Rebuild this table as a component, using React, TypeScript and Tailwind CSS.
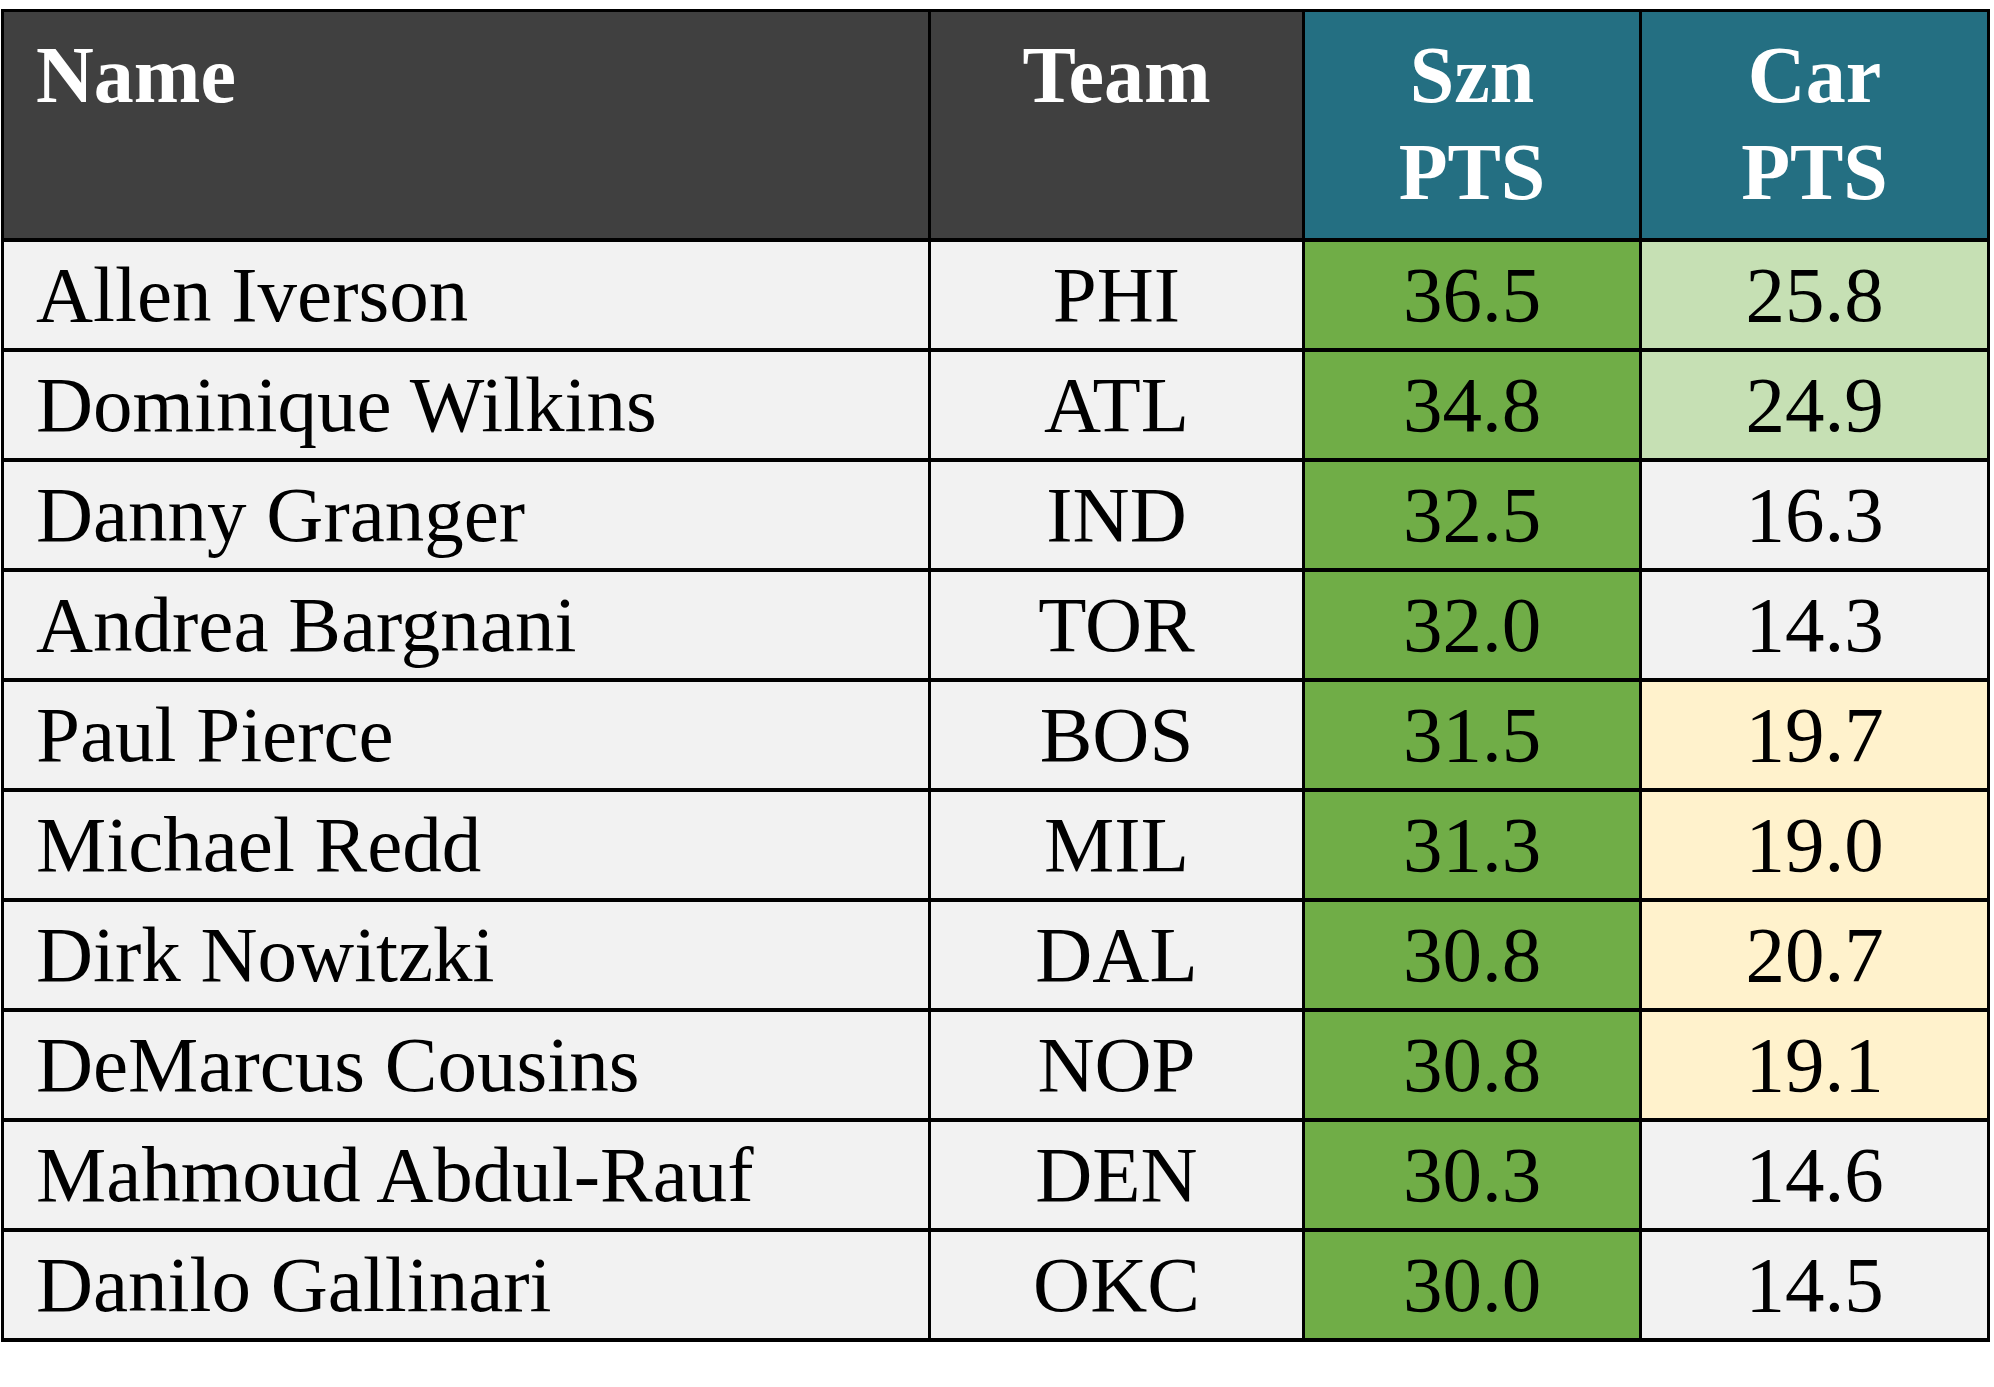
import { Fragment } from "react";

type Row = {
    name: string;
    team: string;
    szn: string;
    car: string;
    carTone: "lightgreen" | "yellow" | "none";
};

const rows: Row[] = [
    { name: "Allen Iverson", team: "PHI", szn: "36.5", car: "25.8", carTone: "lightgreen" },
    { name: "Dominique Wilkins", team: "ATL", szn: "34.8", car: "24.9", carTone: "lightgreen" },
    { name: "Danny Granger", team: "IND", szn: "32.5", car: "16.3", carTone: "none" },
    { name: "Andrea Bargnani", team: "TOR", szn: "32.0", car: "14.3", carTone: "none" },
    { name: "Paul Pierce", team: "BOS", szn: "31.5", car: "19.7", carTone: "yellow" },
    { name: "Michael Redd", team: "MIL", szn: "31.3", car: "19.0", carTone: "yellow" },
    { name: "Dirk Nowitzki", team: "DAL", szn: "30.8", car: "20.7", carTone: "yellow" },
    { name: "DeMarcus Cousins", team: "NOP", szn: "30.8", car: "19.1", carTone: "yellow" },
    { name: "Mahmoud Abdul-Rauf", team: "DEN", szn: "30.3", car: "14.6", carTone: "none" },
    { name: "Danilo Gallinari", team: "OKC", szn: "30.0", car: "14.5", carTone: "none" },
];

const toneClass = {
    lightgreen: "bg-[#c6e0b4]",
    yellow: "bg-[#fff2cc]",
    none: "bg-[#f2f2f2]",
};

export default function App() {
    return (
        <div className="min-h-screen bg-white pt-[9px] pl-[1px] font-['Liberation_Serif',serif]">
            <div className="grid w-fit grid-cols-[924px_371px_334px_345px] grid-rows-[226px_repeat(10,106px)] gap-x-[3px] gap-y-[4px] bg-black p-[3px] pb-[4px]">
                <div className="bg-[#404040] pl-[32px] pt-[15px] text-[80px] font-bold leading-[97px] text-white">Name</div>
                <div className="bg-[#404040] pt-[15px] text-center text-[80px] font-bold leading-[97px] text-white">Team</div>
                <div className="bg-[#246f82] pt-[15px] text-center text-[80px] font-bold leading-[97px] text-white">
                    Szn
                    <br />
                    PTS
                </div>
                <div className="bg-[#246f82] pt-[15px] text-center text-[80px] font-bold leading-[97px] text-white">
                    Car
                    <br />
                    PTS
                </div>
                {rows.map((r) => (
                    <Fragment key={r.name}>
                        <div className="flex items-center bg-[#f2f2f2] pl-[32px] text-[79px] text-black">{r.name}</div>
                        <div className="flex items-center justify-center bg-[#f2f2f2] text-[79px] text-black">{r.team}</div>
                        <div className="flex items-center justify-center bg-[#70ad47] text-[79px] text-black">{r.szn}</div>
                        <div className={`flex items-center justify-center text-[79px] text-black ${toneClass[r.carTone]}`}>{r.car}</div>
                    </Fragment>
                ))}
            </div>
        </div>
    );
}
